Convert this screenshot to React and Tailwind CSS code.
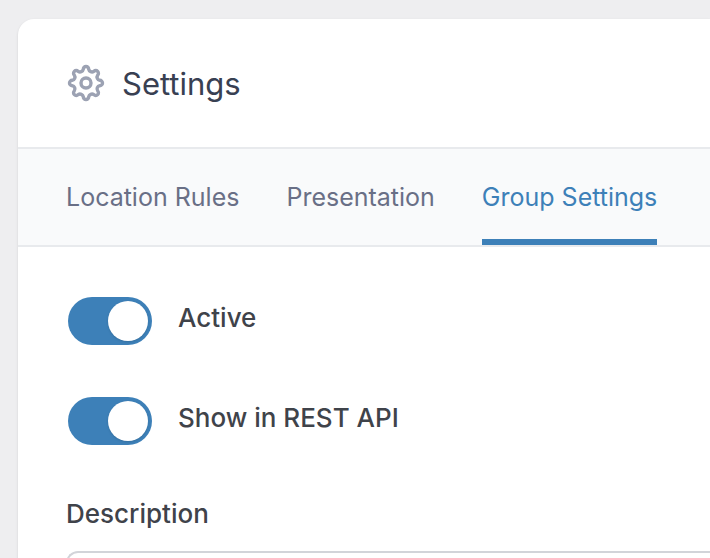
import { useState } from "react";

const tabs = ["Location Rules", "Presentation", "Group Settings"];

function GearIcon() {
  return (
    <svg
      className="h-11 w-11 text-[#9ca2b3]"
      viewBox="-22 -22 44 44"
      fill="none"
      stroke="currentColor"
      strokeWidth="3.4"
      strokeLinejoin="round"
      aria-hidden="true"
    >
      <path d="M-2.7 -13.8A2.7 2.7 0 0 1 2.7 -13.8A3.3 3.3 0 0 0 7.85 -11.67A2.7 2.7 0 0 1 11.67 -7.85A3.3 3.3 0 0 0 13.8 -2.7A2.7 2.7 0 0 1 13.8 2.7A3.3 3.3 0 0 0 11.67 7.85A2.7 2.7 0 0 1 7.85 11.67A3.3 3.3 0 0 0 2.7 13.8A2.7 2.7 0 0 1 -2.7 13.8A3.3 3.3 0 0 0 -7.85 11.67A2.7 2.7 0 0 1 -11.67 7.85A3.3 3.3 0 0 0 -13.8 2.7A2.7 2.7 0 0 1 -13.8 -2.7A3.3 3.3 0 0 0 -11.67 -7.85A2.7 2.7 0 0 1 -7.85 -11.67A3.3 3.3 0 0 0 -2.7 -13.8Z" />
      <circle r="5" />
    </svg>
  );
}

function Toggle({ id, label }) {
  const [on, setOn] = useState(true);
  return (
    <div className="flex items-start gap-[26px]">
      <input
        id={id}
        type="checkbox"
        role="switch"
        checked={on}
        onChange={(e) => setOn(e.target.checked)}
        className="h-12 w-[84px] shrink-0 cursor-pointer appearance-none rounded-full bg-gray-300 p-1 before:block before:h-10 before:w-10 before:rounded-full before:bg-white before:shadow-sm checked:bg-[#3d80b8] checked:before:ml-9"
      />
      <label htmlFor={id} className="pt-px text-[26px] leading-10 font-medium text-[#3f434a]">
        {label}
      </label>
    </div>
  );
}

export default function App() {
  const [active, setActive] = useState("Group Settings");
  return (
    <div className="h-screen overflow-hidden bg-[#eeeef0] pt-[19px] pl-[18px] font-['Inter',sans-serif]">
      <section className="min-h-screen rounded-tl-2xl bg-white shadow">
        <header className="flex h-[130px] items-center gap-3.5 border-b-2 border-[#e8eaed] pl-[46px]">
          <GearIcon />
          <h2 className="pt-0.5 text-[31px] leading-10 text-[#384052]">Settings</h2>
        </header>
        <nav className="flex h-[98px] gap-[47px] border-b-2 border-[#e8eaed] bg-[#f9fafb] pl-12">
          {tabs.map((tab) => (
            <a
              key={tab}
              href="#"
              onClick={(e) => {
                e.preventDefault();
                setActive(tab);
              }}
              className={
                tab === active
                  ? "border-b-6 border-[#3d80b8] pt-7 text-[25px] leading-10 whitespace-nowrap text-[#3d80b8]"
                  : "border-b-6 border-transparent pt-7 text-[25px] leading-10 whitespace-nowrap text-[#696f86]"
              }
            >
              {tab}
            </a>
          ))}
        </nav>
        <div className="flex flex-col pt-[50px] pl-[50px]">
          <div className="flex flex-col gap-[52px]">
            <Toggle id="active" label="Active" />
            <Toggle id="rest" label="Show in REST API" />
          </div>
          <div className="-ml-0.5 flex flex-col gap-[17px] pt-[49px]">
            <label htmlFor="description" className="text-[26px] leading-10 font-medium text-[#3f434a]">
              Description
            </label>
            <input
              id="description"
              type="text"
              className="h-20 rounded-l-xl border-2 border-r-0 border-[#d2d4d9] px-6 text-[26px]"
            />
          </div>
        </div>
      </section>
    </div>
  );
}
